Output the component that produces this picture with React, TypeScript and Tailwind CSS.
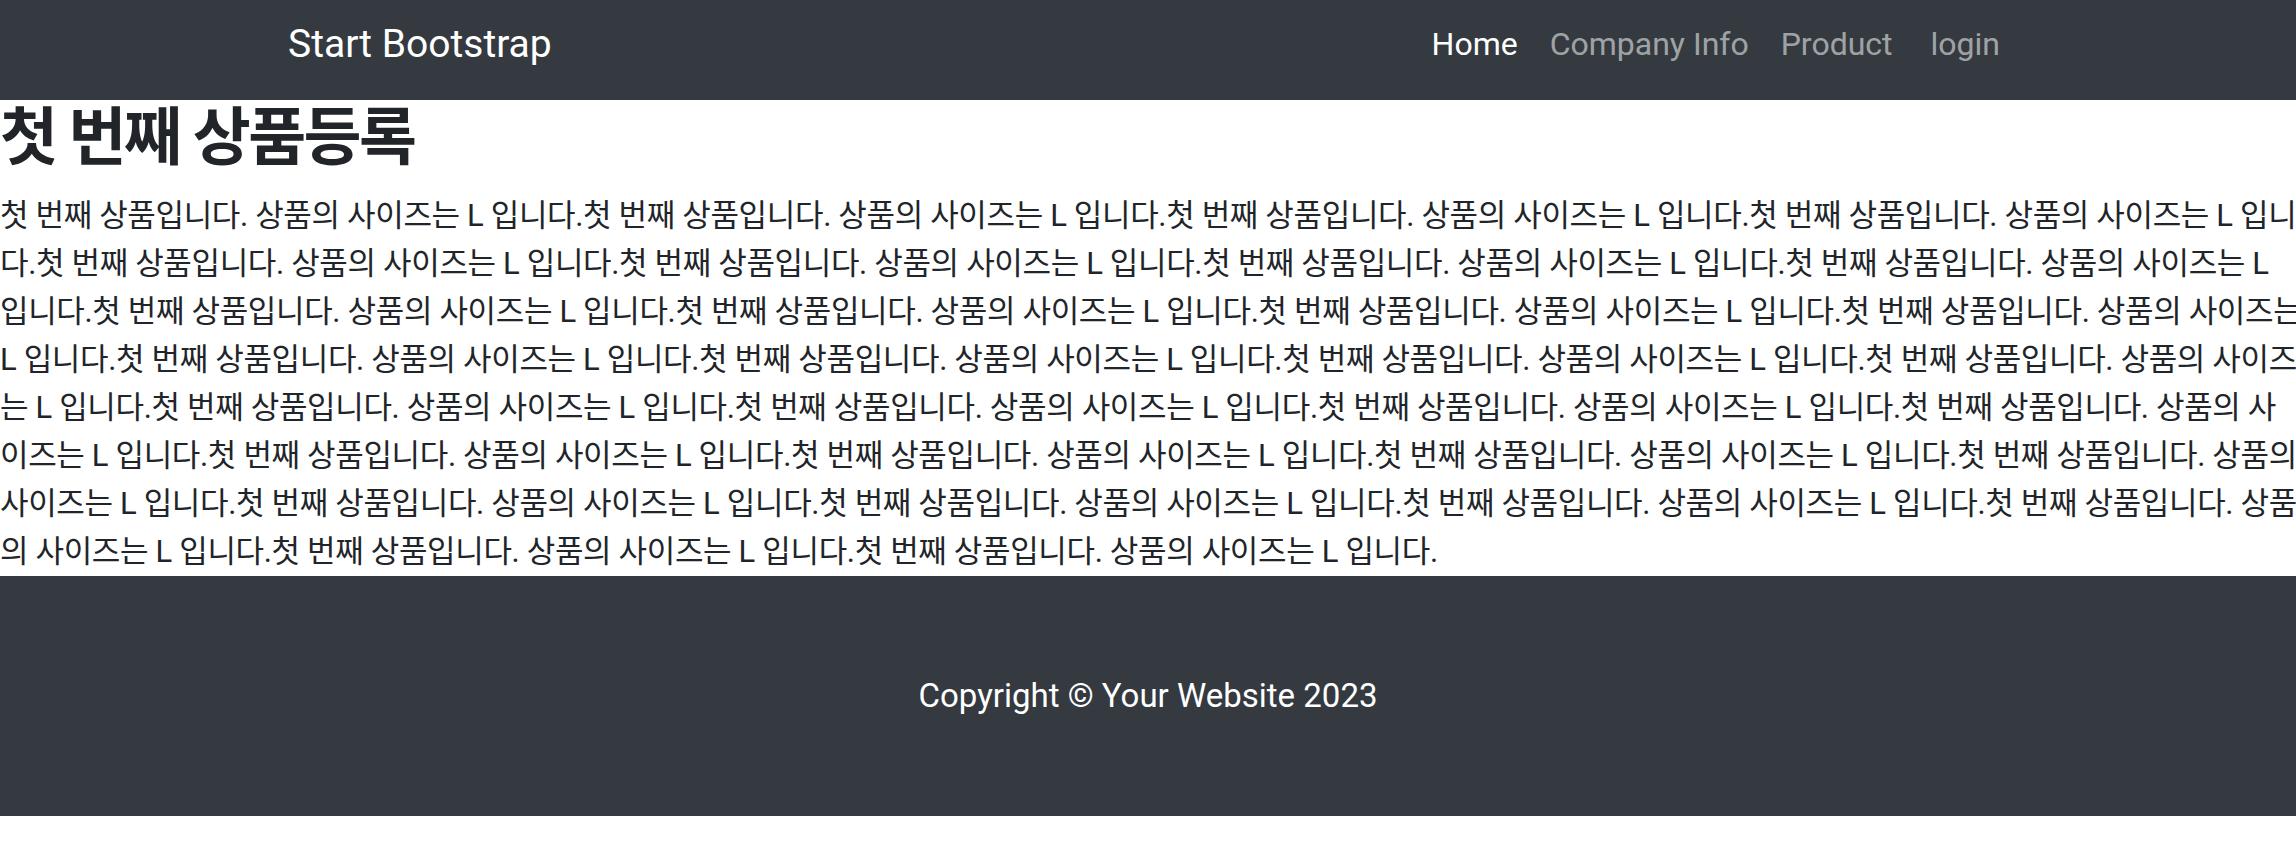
import React from "react";

const R = "첫 번째 상품입니다. 상품의 사이즈는 L 입니다.";
const R3 = R + R + R;

const lines: string[] = [
  R3 + "첫 번째 상품입니다. 상품의 사이즈는 L 입니",
  "다." + R3 + "첫 번째 상품입니다. 상품의 사이즈는 L",
  "입니다." + R3 + "첫 번째 상품입니다. 상품의 사이즈는",
  "L 입니다." + R3 + "첫 번째 상품입니다. 상품의 사이즈",
  "는 L 입니다." + R3 + "첫 번째 상품입니다. 상품의 사",
  "이즈는 L 입니다." + R3 + "첫 번째 상품입니다. 상품의",
  "사이즈는 L 입니다." + R3 + "첫 번째 상품입니다. 상품",
  "의 사이즈는 L 입니다." + R + R,
];

export default function App() {
  return (
    <div className="w-full overflow-x-hidden bg-white font-['Roboto','Noto_Sans_CJK_KR',sans-serif]">
      <nav className="h-[100px] bg-[#343a40] pb-[12px] flex items-center">
        <div className="w-[1920px] mx-auto px-[96px] flex items-center justify-between">
          <a className="ml-[4px] text-[39px] leading-[1.5] text-white">Start Bootstrap</a>
          <ul className="flex items-center">
            <li>
              <a className="block px-[16px] text-[32px] leading-[1.5] text-white">Home</a>
            </li>
            <li>
              <a className="block px-[16px] text-[32px] leading-[1.5] text-[rgba(255,255,255,0.55)]">Company Info</a>
            </li>
            <li>
              <a className="block px-[16px] text-[32px] leading-[1.5] text-[rgba(255,255,255,0.55)]">Product</a>
            </li>
            <li>
              <a className="block pl-[22px] pr-[12px] text-[32px] leading-[1.5] text-[rgba(255,255,255,0.55)]">login</a>
            </li>
          </ul>
        </div>
      </nav>
      <main className="text-[#212529]">
        <h2 className="text-[63px] leading-[1.2] font-bold tracking-[-2.5px] mb-[16px]">첫 번째 상품등록</h2>
        <div className="text-[31px] leading-[48px] tracking-[-0.35px] whitespace-nowrap overflow-hidden">
          {lines.map((l, i) => (
            <div key={i}>{l}</div>
          ))}
        </div>
      </main>
      <footer className="h-[240px] bg-[#343a40] flex items-center justify-center">
        <p className="text-[33px] leading-[1.5] text-white">Copyright © Your Website 2023</p>
      </footer>
    </div>
  );
}
